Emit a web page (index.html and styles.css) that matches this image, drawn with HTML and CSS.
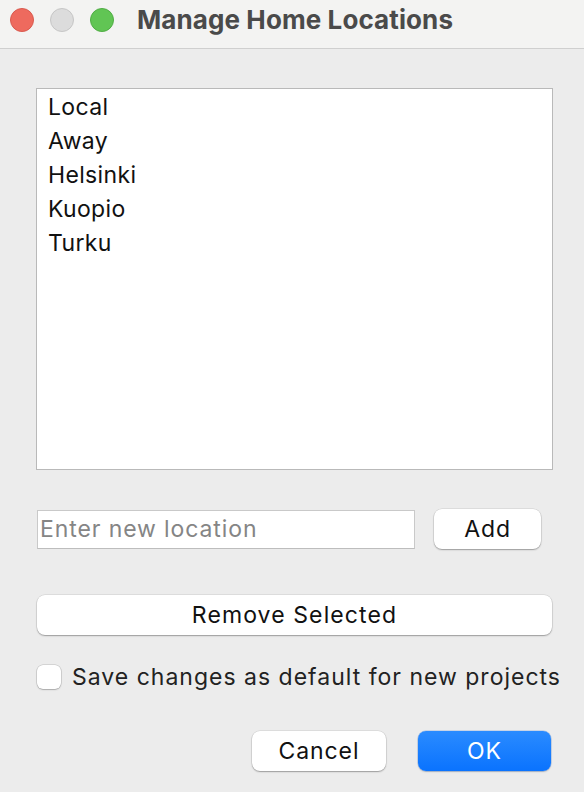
FILE: index.html
```html
<!DOCTYPE html>
<html>
<head>
<meta charset="utf-8">
<link rel="stylesheet" href="styles.css">
</head>
<body>
<div class="window">
  <div class="titlebar">
    <div class="lights">
      <span class="light red"></span>
      <span class="light grey"></span>
      <span class="light green"></span>
    </div>
    <div class="title">Manage Home Locations</div>
  </div>
  <div class="content">
    <div class="list">
      <div class="item">Local</div>
      <div class="item">Away</div>
      <div class="item">Helsinki</div>
      <div class="item">Kuopio</div>
      <div class="item">Turku</div>
    </div>
    <div class="add-row">
      <input class="field" type="text" placeholder="Enter new location">
      <button class="btn add">Add</button>
    </div>
    <button class="btn remove">Remove Selected</button>
    <label class="check-row">
      <span class="checkbox"></span>
      <span class="check-label">Save changes as default for new projects</span>
    </label>
    <div class="actions">
      <button class="btn cancel">Cancel</button>
      <button class="btn ok">OK</button>
    </div>
  </div>
</div>
</body>
</html>
```

FILE: styles.css
```css
* { box-sizing: border-box; }
html, body {
  margin: 0;
  padding: 0;
  width: 584px;
  height: 792px;
  background: #ececec;
  font-family: Inter, "Liberation Sans", sans-serif;
  overflow: hidden;
}
.window {
  display: flex;
  flex-direction: column;
  height: 792px;
}
.titlebar {
  flex: 0 0 49px;
  height: 49px;
  background: #f3f3f2;
  border-bottom: 1px solid #cfcfcf;
  display: flex;
  align-items: center;
  padding-left: 10px;
}
.lights {
  display: flex;
  gap: 16px;
  margin-top: -9px;
}
.light {
  width: 24px;
  height: 24px;
  border-radius: 50%;
  display: block;
}
.red { background: #ee6a5e; border: 1px solid #d95a4f; }
.grey { background: #dcdcdc; border: 1px solid #c6c6c6; }
.green { background: #61c554; border: 1px solid #50ad45; }
.title {
  margin-left: 23px;
  margin-top: -10px;
  font-size: 26px;
  font-weight: 700;
  color: #4a4a4a;
  letter-spacing: 0.1px;
  white-space: nowrap;
}
.content {
  padding: 39px 31px 0 36px;
  display: flex;
  flex-direction: column;
}
.list {
  flex: 0 0 382px;
  height: 382px;
  background: #fff;
  border: 1px solid #b9b9b9;
  padding: 1px 0 0 11px;
}
.item {
  font-size: 23px;
  line-height: 34px;
  letter-spacing: 0.35px;
  color: #111;
}
.add-row {
  display: flex;
  align-items: center;
  margin-top: 39px;
}
.field {
  width: 378px;
  height: 39px;
  margin-left: 1px;
  border: 1px solid #c9c9c9;
  border-bottom-color: #bdbdbd;
  background: #fff;
  font-family: inherit;
  font-size: 23px;
  letter-spacing: 0.9px;
  padding: 0 2px;
  outline: none;
}
.field::placeholder { color: #858585; }
.btn {
  font-family: inherit;
  font-size: 23px;
  letter-spacing: 0.9px;
  color: #111;
  background: #fff;
  border: none;
  border-radius: 8px;
  box-shadow: 0 0 0 0.5px rgba(0,0,0,0.12), 0 1px 1.5px rgba(0,0,0,0.3);
  height: 40px;
  padding: 0;
  flex-shrink: 0;
}
.add {
  width: 107px;
  margin-left: 19px;
}
.remove {
  margin-top: 46px;
  margin-left: 1px;
  width: 515px;
  letter-spacing: 1.1px;
}
.check-row {
  display: flex;
  align-items: center;
  margin-top: 28px;
  margin-left: 1px;
  white-space: nowrap;
}
.checkbox {
  flex: 0 0 24px;
  width: 24px;
  height: 24px;
  border-radius: 6px;
  background: #fff;
  box-shadow: 0 0 0 0.5px rgba(0,0,0,0.2), 0 1px 1.5px rgba(0,0,0,0.2);
}
.check-label {
  margin-left: 11px;
  font-size: 23px;
  letter-spacing: 1px;
  color: #222;
}
.actions {
  display: flex;
  justify-content: flex-end;
  gap: 32px;
  margin-top: 40px;
  margin-right: 2px;
}
.cancel { width: 134px; }
.ok {
  width: 133px;
  color: #fff;
  background: linear-gradient(#2a8bff, #0a73fe);
  box-shadow: 0 0 0 0.5px rgba(0,80,200,0.3), 0 1px 1.5px rgba(0,0,0,0.2);
}
```
